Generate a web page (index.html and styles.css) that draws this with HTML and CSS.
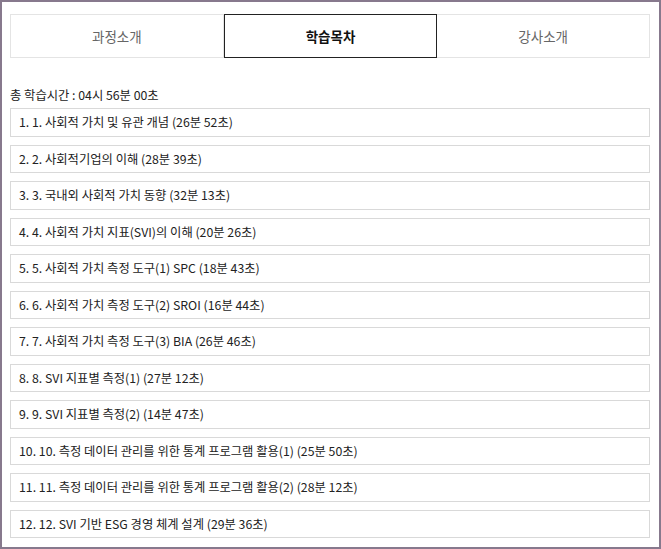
FILE: index.html
```html
<!DOCTYPE html>
<html>
<head>
    <meta charset="utf-8">
    <title>학습목차</title>
    <link rel="stylesheet" href="styles.css">
</head>
<body>
    <div class="frame">
        <!-- 탭 메뉴 -->
        <ul class="tabs">
            <li class="tab">과정소개</li>
            <li class="tab active">학습목차</li>
            <li class="tab">강사소개</li>
        </ul>

        <!-- 학습목차 -->
        <p class="total">총 학습시간 : 04시 56분 00초</p>
        <ul class="chapters">
            <li>1. 1. 사회적 가치 및 유관 개념 (26분 52초)</li>
            <li>2. 2. 사회적기업의 이해 (28분 39초)</li>
            <li>3. 3. 국내외 사회적 가치 동향 (32분 13초)</li>
            <li>4. 4. 사회적 가치 지표(SVI)의 이해 (20분 26초)</li>
            <li>5. 5. 사회적 가치 측정 도구(1) SPC (18분 43초)</li>
            <li>6. 6. 사회적 가치 측정 도구(2) SROI (16분 44초)</li>
            <li>7. 7. 사회적 가치 측정 도구(3) BIA (26분 46초)</li>
            <li>8. 8. SVI 지표별 측정(1) (27분 12초)</li>
            <li>9. 9. SVI 지표별 측정(2) (14분 47초)</li>
            <li>10. 10. 측정 데이터 관리를 위한 통계 프로그램 활용(1) (25분 50초)</li>
            <li>11. 11. 측정 데이터 관리를 위한 통계 프로그램 활용(2) (28분 12초)</li>
            <li>12. 12. SVI 기반 ESG 경영 체계 설계 (29분 36초)</li>
        </ul>
    </div>
</body>
</html>
```

FILE: styles.css
```css
html, body {
    margin: 0;
    padding: 0;
    background-color: #ffffff;
}
body {
    font-family: "Noto Sans CJK KR", "Noto Sans", sans-serif;
    color: #222;
}
.frame {
    box-sizing: border-box;
    width: 661px;
    height: 549px;
    border: 2px solid #87798d;
    padding: 12px 9px 0 8px;
    overflow: hidden;
}
.tabs {
    display: flex;
    list-style: none;
    margin: 0;
    padding: 0;
}
.tab {
    flex: 1;
    height: 42px;
    line-height: 42px;
    text-align: center;
    font-size: 13.5px;
    color: #666;
    border: 1px solid #e4e4e4;
}
.tab + .tab {
    border-left: none;
}
.tab.active {
    border: 1px solid #222;
    color: #111;
    font-weight: bold;
}
.total {
    margin: 28px 0 4px;
    font-size: 12.3px;
    line-height: 18px;
    color: #222;
}
.chapters {
    list-style: none;
    margin: 0;
    padding: 0;
    display: flex;
    flex-direction: column;
    gap: 8px;
}
.chapters li {
    border: 1px solid #d9d9d9;
    padding: 4px 8px;
    font-size: 12.3px;
    line-height: 18.5px;
    color: #222;
}
```
